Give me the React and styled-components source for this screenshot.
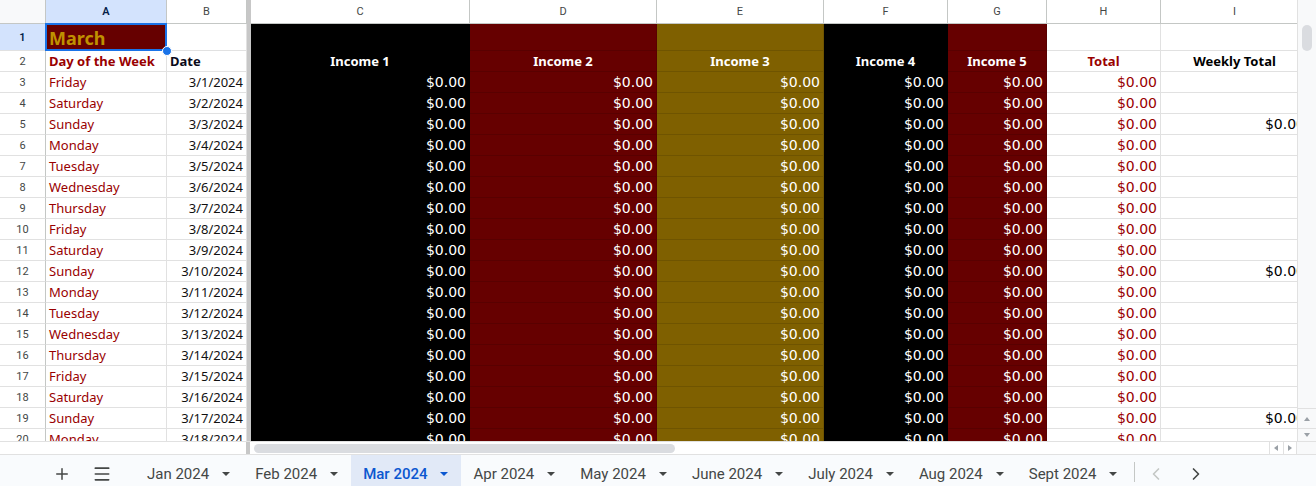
import React from 'react';
import styled, { createGlobalStyle } from 'styled-components';
import { Plus, Menu, ChevronLeft, ChevronRight } from 'lucide-react';

const GlobalStyle = createGlobalStyle`
  html, body {
    margin: 0;
    padding: 0;
    background: #fff;
  }
  * { box-sizing: border-box; }
`;

const MAROON = '#660000';
const MUSTARD = '#7f6000';
const BLACK = '#000000';
const RED_TEXT = '#990000';
const COMIC = '"Comic Sans MS", "Noto Sans", sans-serif';
const MONEY = '"Century Gothic", "DejaVu Sans", sans-serif';
const UI = 'Roboto, "Liberation Sans", Arial, sans-serif';

const Page = styled.div`
  width: 1316px;
  height: 486px;
  display: flex;
  flex-direction: column;
  overflow: hidden;
  font-family: ${UI};
`;

const Body = styled.div`
  display: flex;
  height: 441px;
`;

const SheetArea = styled.div`
  flex: 1;
  overflow: hidden;
`;

const Grid = styled.div`
  display: grid;
  grid-template-columns: 46px 121px 80px 4px 219px 187px 167px 124px 99px 114px 148px;
  grid-template-rows: 24px 27px repeat(19, 21px);
  width: max-content;
`;

const FreezeLine = styled.div`
  grid-column: 4;
  grid-row: 1 / -1;
  background: #c7c7c7;
`;

const Corner = styled.div`
  background: #f8f9fa;
  border-right: 1px solid #c4c7c5;
  border-bottom: 1px solid #c4c7c5;
`;

const ColHead = styled.div`
  display: flex;
  align-items: center;
  justify-content: center;
  font-size: 11px;
  color: ${(p) => (p.$selected ? '#041e49' : '#444746')};
  font-weight: ${(p) => (p.$selected ? 600 : 400)};
  background: ${(p) => (p.$selected ? '#d3e3fd' : '#fff')};
  border-right: 1px solid #c4c7c5;
  border-bottom: 1px solid #c4c7c5;
`;

const RowHead = styled.div`
  display: flex;
  align-items: center;
  justify-content: center;
  font-size: 11px;
  color: ${(p) => (p.$selected ? '#041e49' : '#444746')};
  font-weight: ${(p) => (p.$selected ? 600 : 400)};
  background: ${(p) => (p.$selected ? '#d3e3fd' : '#fff')};
  border-right: 1px solid #c4c7c5;
  border-bottom: 1px solid #e1e1e1;
`;

const Cell = styled.div`
  position: relative;
  display: flex;
  align-items: flex-end;
  justify-content: ${(p) => p.$align || 'flex-start'};
  padding: 0 3px 1px;
  white-space: nowrap;
  overflow: ${(p) => (p.$visible ? 'visible' : 'hidden')};
  background: ${(p) => p.$bg || '#fff'};
  color: ${(p) => p.$color || '#000'};
  font-family: ${(p) => p.$font || COMIC};
  font-size: ${(p) => p.$size || 13}px;
  font-weight: ${(p) => (p.$bold ? 700 : 400)};
  line-height: 18px;
  border-right: 1px solid ${(p) => (p.$bg ? 'rgba(0,0,0,0.12)' : '#e1e1e1')};
  border-bottom: 1px solid ${(p) => (p.$bg ? 'rgba(0,0,0,0.12)' : '#e1e1e1')};
  z-index: ${(p) => (p.$visible ? 2 : 0)};
`;

const TitleCell = styled(Cell)`
  line-height: 24px;
  padding-bottom: 0;
`;

const Selection = styled.div`
  position: absolute;
  top: -1px;
  left: -1px;
  right: -1px;
  bottom: -1px;
  border: 2px solid #1a73e8;
  pointer-events: none;
`;

const Handle = styled.div`
  position: absolute;
  right: -6px;
  bottom: -6px;
  width: 10px;
  height: 10px;
  border-radius: 50%;
  background: #1a73e8;
  border: 1px solid #fff;
`;

const VScroll = styled.div`
  width: 19px;
  background: #f8f9fa;
  border-left: 1px solid #e1e1e1;
  display: flex;
  flex-direction: column;
  align-items: center;
`;

const VThumb = styled.div`
  width: 10px;
  height: 26px;
  margin-top: 25px;
  border-radius: 5px;
  background: #dadce0;
`;

const ArrowStack = styled.div`
  margin-top: auto;
  display: flex;
  flex-direction: column;
  width: 100%;
`;

const ArrowBtn = styled.div`
  height: ${(p) => p.$h || 14}px;
  display: flex;
  align-items: center;
  justify-content: center;
  border-top: 1px solid #e1e1e1;
`;

const Tri = styled.span`
  width: 0;
  height: 0;
  border-left: ${(p) => (p.$dir === 'up' || p.$dir === 'down' ? '3px solid transparent' : p.$dir === 'right' ? '4px solid #9aa0a6' : '0')};
  border-right: ${(p) => (p.$dir === 'up' || p.$dir === 'down' ? '3px solid transparent' : p.$dir === 'left' ? '4px solid #9aa0a6' : '0')};
  border-top: ${(p) => (p.$dir === 'left' || p.$dir === 'right' ? '3px solid transparent' : p.$dir === 'down' ? '4px solid #9aa0a6' : '0')};
  border-bottom: ${(p) => (p.$dir === 'left' || p.$dir === 'right' ? '3px solid transparent' : p.$dir === 'up' ? '4px solid #9aa0a6' : '0')};
`;

const HScrollRow = styled.div`
  display: flex;
  height: 14px;
  border-top: 1px solid #e1e1e1;
  border-bottom: 1px solid #e1e1e1;
`;

const HBlank = styled.div`
  width: 246px;
  background: #fff;
`;

const HDivider = styled.div`
  width: 4px;
  background: #c7c7c7;
`;

const HTrack = styled.div`
  flex: 1;
  display: flex;
  align-items: center;
  padding-left: 4px;
`;

const HThumb = styled.div`
  width: 421px;
  height: 9px;
  border-radius: 5px;
  background: #dadce0;
`;

const HArrows = styled.div`
  width: 28px;
  display: flex;
  border-left: 1px solid #e1e1e1;
`;

const HArrow = styled.div`
  flex: 1;
  display: flex;
  align-items: center;
  justify-content: center;
  border-right: 1px solid #e1e1e1;
`;

const HCorner = styled.div`
  width: 19px;
  background: #f8f9fa;
`;

const TabBar = styled.div`
  flex: 1;
  display: flex;
  align-items: stretch;
  background: #f9fbfd;
  padding-left: 42px;
  color: #444746;
`;

const IconBtn = styled.div`
  width: 40px;
  display: flex;
  align-items: center;
  justify-content: center;
  padding-top: 6px;
  color: ${(p) => (p.$muted ? '#c4c7c5' : '#444746')};
`;

const Tabs = styled.div`
  display: flex;
  margin-left: ${(p) => p.$offset || 0}px;
`;

const Tab = styled.div`
  display: flex;
  align-items: center;
  gap: 13px;
  padding: 6px 13px 0 12px;
  font-size: 15px;
  font-weight: ${(p) => (p.$active ? 500 : 400)};
  color: ${(p) => (p.$active ? '#0b57d0' : '#444746')};
  background: ${(p) => (p.$active ? '#e1e9f7' : 'transparent')};
`;

const Caret = styled.span`
  width: 0;
  height: 0;
  border-left: 4px solid transparent;
  border-right: 4px solid transparent;
  border-top: 4px solid currentColor;
`;

const Sep = styled.div`
  width: 1px;
  margin: 7px 1px 4px 4px;
  background: #c4c7c5;
`;

const DAYS = ['Friday', 'Saturday', 'Sunday', 'Monday', 'Tuesday', 'Wednesday', 'Thursday'];
const INCOME_BG = [BLACK, MAROON, MUSTARD, BLACK, MAROON];
const LETTERS = ['C', 'D', 'E', 'F', 'G', 'H', 'I'];
const TABS = ['Jan 2024', 'Feb 2024', 'Mar 2024', 'Apr 2024', 'May 2024', 'June 2024', 'July 2024', 'Aug 2024', 'Sept 2024'];

function DataRow({ row, day }) {
  const name = DAYS[(day - 1) % 7];
  return (
    <>
      <RowHead>{row}</RowHead>
      <Cell $color={RED_TEXT}>{name}</Cell>
      <Cell $align="flex-end" $color="#111">{`3/${day}/2024`}</Cell>
      {INCOME_BG.map((bg, i) => (
        <Cell key={i} $bg={bg} $color="#fff" $align="flex-end" $font={MONEY} $size={14}>
          $0.00
        </Cell>
      ))}
      <Cell $align="flex-end" $color={RED_TEXT} $font={MONEY} $size={14}>$0.00</Cell>
      <Cell $align="flex-end" $color="#000" $font={MONEY} $size={14}>
        {name === 'Sunday' ? '$0.00' : ''}
      </Cell>
    </>
  );
}

export default function App() {
  const days = Array.from({ length: 18 }, (_, i) => i + 1);
  return (
    <Page>
      <GlobalStyle />
      <Body>
        <SheetArea>
          <Grid>
            <FreezeLine />
            <Corner />
            <ColHead $selected>A</ColHead>
            <ColHead>B</ColHead>
            {LETTERS.map((l) => (
              <ColHead key={l}>{l}</ColHead>
            ))}

            <RowHead $selected>1</RowHead>
            <TitleCell $bg={MAROON} $color="#bf9000" $bold $size={18} $visible>
              March
              <Selection />
              <Handle />
            </TitleCell>
            <Cell />
            {INCOME_BG.map((bg, i) => (
              <Cell key={i} $bg={bg} />
            ))}
            <Cell />
            <Cell />

            <RowHead>2</RowHead>
            <Cell $color={RED_TEXT} $bold>Day of the Week</Cell>
            <Cell $color="#0a0a1a" $bold>Date</Cell>
            {INCOME_BG.map((bg, i) => (
              <Cell key={i} $bg={bg} $color="#fff" $bold $align="center">{`Income ${i + 1}`}</Cell>
            ))}
            <Cell $color={RED_TEXT} $bold $align="center">Total</Cell>
            <Cell $color="#000" $bold $align="center">Weekly Total</Cell>

            {days.map((d) => (
              <DataRow key={d} row={d + 2} day={d} />
            ))}
          </Grid>
        </SheetArea>
        <VScroll>
          <VThumb />
          <ArrowStack>
            <ArrowBtn $h={20}><Tri $dir="up" /></ArrowBtn>
            <ArrowBtn $h={13}><Tri $dir="down" /></ArrowBtn>
          </ArrowStack>
        </VScroll>
      </Body>
      <HScrollRow>
        <HBlank />
        <HDivider />
        <HTrack>
          <HThumb />
        </HTrack>
        <HArrows>
          <HArrow><Tri $dir="left" /></HArrow>
          <HArrow><Tri $dir="right" /></HArrow>
        </HArrows>
        <HCorner />
      </HScrollRow>
      <TabBar>
        <IconBtn><Plus size={18} strokeWidth={2} /></IconBtn>
        <IconBtn><Menu size={20} strokeWidth={2} /></IconBtn>
        <Tabs $offset={13}>
          {TABS.map((t) => (
            <Tab key={t} $active={t === 'Mar 2024'}>
              {t}
              <Caret />
            </Tab>
          ))}
        </Tabs>
        <Sep />
        <IconBtn $muted><ChevronLeft size={20} /></IconBtn>
        <IconBtn><ChevronRight size={20} /></IconBtn>
      </TabBar>
    </Page>
  );
}
